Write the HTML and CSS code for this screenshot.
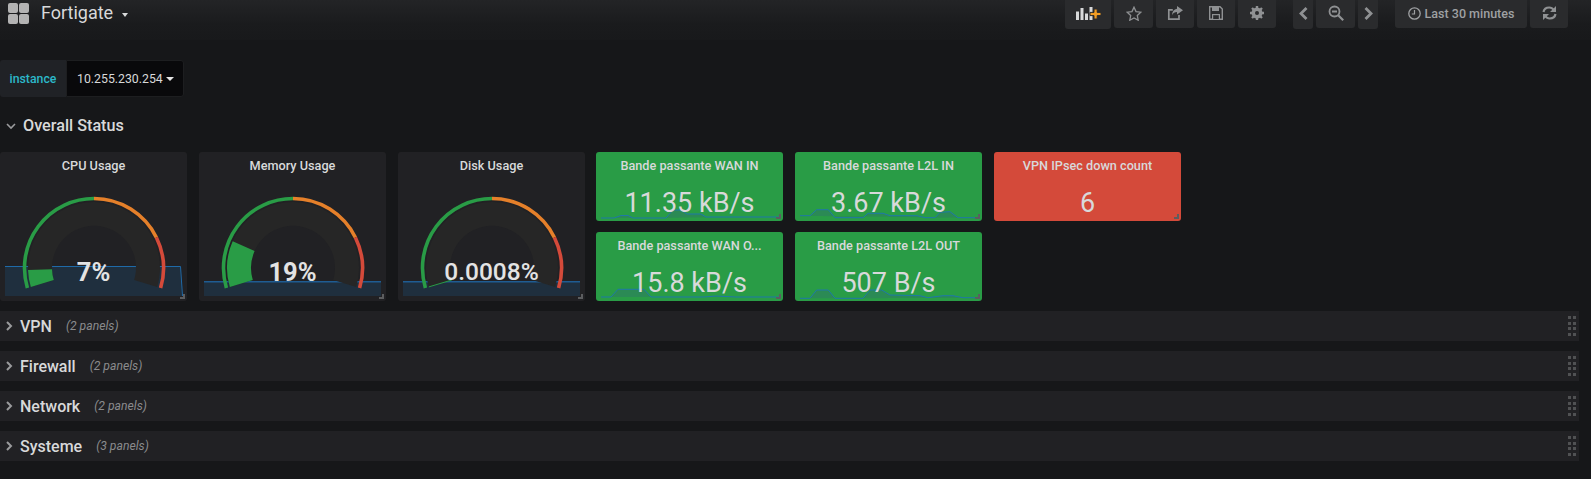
FILE: index.html
```html
<!DOCTYPE html>
<html lang="en">
<head>
    <meta charset="UTF-8">
    <title>Fortigate</title>
    <link rel="stylesheet" href="styles.css">
</head>
<body>

<header class="navbar">
    <div class="nav-left">
        <svg class="grid-icon" width="22" height="22" viewBox="0 0 22 22"><rect x="0" y="0" width="10" height="10" rx="2"/><rect x="11" y="0" width="10" height="10" rx="2"/><rect x="0" y="11" width="10" height="10" rx="2"/><rect x="11" y="11" width="10" height="10" rx="2"/></svg>
        <span class="dash-title">Fortigate</span>
        <span class="caret-small"></span>
    </div>
    <div class="nav-right">
        <div class="nav-btn w-add tall">
            <svg width="25" height="13" viewBox="0 0 25 13"><path fill="#d8d9da" d="M0 4.5h3V13H0zM4.500 1h3v12h-3zM9 6.500h3V13H9zM13.500 0h3v13h-3z"/><path fill="#f29d24" stroke="#2a2b2d" stroke-width="1" d="M18 2h3.200v3.400h3.800v3.200h-3.800V12H18V8.600h-4V5.400h4z"/></svg>
        </div>
        <div class="nav-btn w-star">
            <svg width="16" height="15" viewBox="0 0 16 15"><path fill="none" stroke="#8f9193" stroke-width="1.300" d="M8 1.200l2 4.400 4.800.6-3.500 3.300.9 4.700L8 11.900l-4.200 2.300.9-4.700L1.200 6.200 6 5.600z"/></svg>
        </div>
        <div class="nav-btn w-share">
            <svg width="16" height="15" viewBox="0 0 16 15"><path fill="none" stroke="#8f9193" stroke-width="1.700" d="M12 9v4.200H1.800V3.800h4"/><path fill="#8f9193" d="M10 0l6 4.300-6 4.300V6c-2.200 0-4 .9-5 3.200 0-3.800 2-6 5-6.500z"/></svg>
        </div>
        <div class="nav-btn w-save">
            <svg width="14" height="14" viewBox="0 0 14 14"><path fill="none" stroke="#8f9193" stroke-width="1.400" d="M.7.700h10.300l2.300 2.300v10.300H.7z"/><path fill="#8f9193" d="M3 0h7v5H3zM3 8h8v6H3z"/><path fill="#2a2b2d" d="M4.200 9.200h5.600V13H4.200z"/></svg>
        </div>
        <div class="nav-btn w-gear">
            <svg width="14" height="14" viewBox="0 0 14 14"><circle cx="7" cy="7" r="4" fill="none" stroke="#8f9193" stroke-width="3"/><path stroke="#8f9193" stroke-width="2.400" d="M7 0v14M0 7h14M2 2l10 10M12 2L2 12"/><circle cx="7" cy="7" r="2" fill="#2a2b2d"/></svg>
        </div>
        <div class="nav-btn w-arrow tall range-start">
            <svg width="9" height="13" viewBox="0 0 9 13"><path fill="none" stroke="#8f9193" stroke-width="2.800" d="M7.500 1L2 6.500 7.500 12"/></svg>
        </div>
        <div class="nav-btn w-zoom">
            <svg width="16" height="16" viewBox="0 0 16 16"><circle cx="6.500" cy="6.500" r="5" fill="none" stroke="#8f9193" stroke-width="1.800"/><path stroke="#8f9193" stroke-width="2.200" d="M10.200 10.200l5 5M4 6.500h5"/></svg>
        </div>
        <div class="nav-btn w-arrow tall">
            <svg width="9" height="13" viewBox="0 0 9 13"><path fill="none" stroke="#8f9193" stroke-width="2.800" d="M1.500 1L7 6.500 1.500 12"/></svg>
        </div>
        <div class="nav-btn w-time">
            <svg width="13" height="13" viewBox="0 0 13 13"><circle cx="6.500" cy="6.500" r="5.700" fill="none" stroke="#9fa1a3" stroke-width="1.300"/><path fill="none" stroke="#9fa1a3" stroke-width="1.200" d="M6.500 3v4H3.800"/></svg>
            <span>Last 30 minutes</span>
        </div>
        <div class="nav-btn w-refresh">
            <svg width="15" height="14" viewBox="0 0 15 14"><path fill="none" stroke="#8f9193" stroke-width="2.200" d="M1.500 6C2 3.200 4.500 1.500 7.200 1.500c2 0 3.600 1 4.600 2.500M13.500 8c-.5 2.800-3 4.500-5.700 4.500-2 0-3.600-1-4.600-2.500"/><path fill="#8f9193" d="M14 0v6H8zM1 14V8h6z"/></svg>
        </div>
    </div>
</header>

<div class="submenu">
    <label class="var-label">instance</label>
    <div class="var-value">10.255.230.254<span class="caret-white"></span></div>
</div>

<div class="row-head">
    <svg class="chev" width="10" height="7" viewBox="0 0 10 7"><path fill="none" stroke="#9a9b9d" stroke-width="1.600" d="M1 1l4 4 4-4"/></svg>
    <span>Overall Status</span>
</div>

<main class="panels">
    <div class="panel gauge">
        <div class="panel-title">CPU Usage</div>
        <svg class="spark-area" width="178" height="30" viewBox="0 0 178 30"><path fill="#1f2f3e" d="M0 .5h175l2 29.500H0z"/><path fill="none" stroke="#1f6aa8" d="M0 .5h175.500l2 29.500"/></svg>
        <svg class="gauge-svg" width="187" height="149" viewBox="0 0 187 149">
            <path fill="#262626" d="M30.800 134.900A66 66 0 1 1 157.200 134.900L134.200 128A42 42 0 1 0 53.800 128Z"/>
            <g fill="none" stroke-width="3.600">
                <path stroke="#299c46" d="M27.400 135.900A69.500 69.500 0 0 1 94 46.500"/>
                <path stroke="#e5802a" d="M94 46.500A69.500 69.500 0 0 1 156.400 85.500"/>
                <path stroke="#d44a3a" d="M156.400 85.500A69.500 69.500 0 0 1 160.600 135.900"/>
            </g>
            <path fill="#299c46" d="M30.800 134.900A66 66 0 0 1 28 118L52 117.200A42 42 0 0 0 53.800 128Z"/>
        </svg>
        <div class="gauge-value heavy">7%</div>
        <span class="resize"></span>
    </div>
    <div class="panel gauge">
        <div class="panel-title">Memory Usage</div>
        <svg class="spark-area" width="178" height="15" viewBox="0 0 178 15"><path fill="#1f2f3e" d="M0 .5h177V15H0z"/><path fill="none" stroke="#1f5c92" stroke-width="1.500" d="M0 .8h177"/></svg>
        <svg class="gauge-svg" width="187" height="149" viewBox="0 0 187 149">
            <path fill="#262626" d="M30.800 134.900A66 66 0 1 1 157.200 134.900L134.200 128A42 42 0 1 0 53.800 128Z"/>
            <g fill="none" stroke-width="3.600">
                <path stroke="#299c46" d="M27.400 135.900A69.500 69.500 0 0 1 94 46.500"/>
                <path stroke="#e5802a" d="M94 46.500A69.500 69.500 0 0 1 156.400 85.500"/>
                <path stroke="#d44a3a" d="M156.400 85.500A69.500 69.500 0 0 1 160.600 135.900"/>
            </g>
            <path fill="#299c46" d="M30.800 134.900A66 66 0 0 1 33.700 89.300L55.600 99A42 42 0 0 0 53.800 128Z"/>
        </svg>
        <div class="gauge-value heavy">19%</div>
        <span class="resize"></span>
    </div>
    <div class="panel gauge">
        <div class="panel-title">Disk Usage</div>
        <svg class="spark-area" width="178" height="15" viewBox="0 0 178 15"><path fill="#1f2f3e" d="M0 .5h177V15H0z"/><path fill="none" stroke="#1f5c92" stroke-width="1.500" d="M0 .8h177"/></svg>
        <svg class="gauge-svg" width="187" height="149" viewBox="0 0 187 149">
            <path fill="#262626" d="M30.800 134.900A66 66 0 1 1 157.200 134.900L134.200 128A42 42 0 1 0 53.800 128Z"/>
            <g fill="none" stroke-width="3.600">
                <path stroke="#299c46" d="M27.400 135.900A69.500 69.500 0 0 1 94 46.500"/>
                <path stroke="#e5802a" d="M94 46.500A69.500 69.500 0 0 1 156.400 85.500"/>
                <path stroke="#d44a3a" d="M156.400 85.500A69.500 69.500 0 0 1 160.600 135.900"/>
            </g>
            <path fill="none" stroke="#299c46" stroke-width="1" d="M30.800 134.900L53.800 128"/>
        </svg>
        <div class="gauge-value">0.0008%</div>
        <span class="resize"></span>
    </div>
    <div class="stat-grid">
        <div class="panel stat green">
            <svg class="stat-spark" viewBox="0 0 187 69"><path fill="#2b8a55" stroke="#1f78a8" d="M5 66H18L25 63.500H32L37 66H70L77 58H85L91 62H105L110 65H183"/></svg>
            <div class="panel-title">Bande passante WAN IN</div>
            <div class="stat-value">11.35 kB/s</div>
            <span class="resize"></span>
        </div>
        <div class="panel stat green">
            <svg class="stat-spark" viewBox="0 0 187 69"><path fill="#2b8a55" stroke="#1f78a8" d="M5 63.700H15L21.700 57.700H33.300L40 65.700H68L73 61.300H88L95 63.700H122L130 65.700H140L145 60.300L155 59.700L163 65.700H182"/></svg>
            <div class="panel-title">Bande passante L2L IN</div>
            <div class="stat-value">3.67 kB/s</div>
            <span class="resize"></span>
        </div>
        <div class="panel stat red">
            <div class="panel-title">VPN IPsec down count</div>
            <div class="stat-value">6</div>
            <span class="resize"></span>
        </div>
        <div class="panel stat green">
            <svg class="stat-spark" viewBox="0 0 187 69"><path fill="#2b8a55" stroke="#1f78a8" d="M5 65H15L22 57.300H48L55 65H108L120 64L140 65H183"/></svg>
            <div class="panel-title">Bande passante WAN O...</div>
            <div class="stat-value">15.8 kB/s</div>
            <span class="resize"></span>
        </div>
        <div class="panel stat green">
            <svg class="stat-spark" viewBox="0 0 187 69"><path fill="#2b8a55" stroke="#1f78a8" d="M5 66.300H15L21.700 58H33.300L40 66.300H68L75 58H86.700L95 63L125 63.700L133 65.700L148 63.700H158L168 65.700H182"/></svg>
            <div class="panel-title">Bande passante L2L OUT</div>
            <div class="stat-value">507 B/s</div>
            <span class="resize"></span>
        </div>
    </div>
</main>

<section class="rows">
    <div class="row-collapsed">
        <svg class="chev" width="7" height="10" viewBox="0 0 7 10"><path fill="none" stroke="#9a9b9d" stroke-width="2" d="M1 1l4 4-4 4"/></svg>
        <span class="row-name">VPN</span><span class="row-count">(2 panels)</span>
        <span class="drag"><i></i><i></i><i></i><i></i><i></i><i></i><i></i><i></i></span>
    </div>
    <div class="row-collapsed">
        <svg class="chev" width="7" height="10" viewBox="0 0 7 10"><path fill="none" stroke="#9a9b9d" stroke-width="2" d="M1 1l4 4-4 4"/></svg>
        <span class="row-name">Firewall</span><span class="row-count">(2 panels)</span>
        <span class="drag"><i></i><i></i><i></i><i></i><i></i><i></i><i></i><i></i></span>
    </div>
    <div class="row-collapsed">
        <svg class="chev" width="7" height="10" viewBox="0 0 7 10"><path fill="none" stroke="#9a9b9d" stroke-width="2" d="M1 1l4 4-4 4"/></svg>
        <span class="row-name">Network</span><span class="row-count">(2 panels)</span>
        <span class="drag"><i></i><i></i><i></i><i></i><i></i><i></i><i></i><i></i></span>
    </div>
    <div class="row-collapsed">
        <svg class="chev" width="7" height="10" viewBox="0 0 7 10"><path fill="none" stroke="#9a9b9d" stroke-width="2" d="M1 1l4 4-4 4"/></svg>
        <span class="row-name">Systeme</span><span class="row-count">(3 panels)</span>
        <span class="drag"><i></i><i></i><i></i><i></i><i></i><i></i><i></i><i></i></span>
    </div>
</section>

</body>
</html>
```

FILE: styles.css
```css
html, body {
    height: 479px;
    overflow: hidden;
}

body {
    margin: 0;
    background: #161719;
    color: #d8d9da;
    font-family: 'Roboto', Arial, sans-serif;
    font-size: 13px;
}

.navbar {
    display: flex;
    justify-content: space-between;
    height: 40px;
    box-sizing: border-box;
    padding-right: 23px;
    background: linear-gradient(to bottom, #232426, #1a1b1d 60%, #18191b);
}

.nav-left {
    display: flex;
    align-items: flex-start;
    padding-left: 8px;
    padding-top: 3px;
}

.grid-icon {
    fill: #b3b3b3;
}

.dash-title {
    margin-left: 11px;
    font-size: 18px;
    line-height: 20px;
}

.caret-small {
    margin: 10px 0 0 9px;
    border-top: 4px solid #d8d9da;
    border-left: 3.5px solid transparent;
    border-right: 3.5px solid transparent;
}

.nav-right {
    display: flex;
    gap: 3px;
    align-items: flex-start;
}

.nav-btn {
    display: flex;
    align-items: center;
    justify-content: center;
    gap: 4px;
    height: 28px;
    padding-bottom: 2px;
    box-sizing: border-box;
    background: #2a2b2d;
    border-radius: 0 0 3px 3px;
    color: #9fa1a3;
    font-size: 12.5px;
    font-weight: 500;
}

.tall { height: 29px; }
.w-add { width: 46px; }
.w-star { width: 39px; }
.w-share { width: 38px; }
.w-save { width: 38px; }
.w-gear { width: 38px; }
.w-arrow { width: 20px; }
.range-start { margin-left: 14px; }
.w-zoom { width: 39px; }
.w-time { width: 132px; margin-left: 14px; }
.w-refresh { width: 38px; }

.submenu {
    display: flex;
    height: 37px;
    margin-top: 20px;
    font-size: 12.3px;
}

.var-label {
    width: 66px;
    display: flex;
    align-items: center;
    justify-content: center;
    background: #202226;
    color: #2cb8c9;
    font-weight: 500;
    border-radius: 3px 0 0 3px;
}

.var-value {
    width: 118px;
    display: flex;
    align-items: center;
    padding-left: 10px;
    box-sizing: border-box;
    background: #09090b;
    border: 1px solid #1d1e20;
    border-radius: 0 3px 3px 0;
}

.caret-white {
    margin-left: 3px;
    border-top: 4px solid #e6e6e6;
    border-left: 4px solid transparent;
    border-right: 4px solid transparent;
}

.row-head {
    display: flex;
    align-items: center;
    height: 30px;
    margin-top: 13px;
    font-size: 16.2px;
    font-weight: 500;
}

.row-head .chev {
    margin: 3px 7px 0 6px;
}

.panels {
    display: flex;
    margin-top: 12px;
    gap: 12px;
}

.panel {
    position: relative;
    box-sizing: border-box;
    width: 187px;
    border-radius: 3px;
    background: #212124;
}

.gauge {
    height: 149px;
}

.panel-title {
    position: relative;
    padding-top: 6px;
    height: 25px;
    text-align: center;
    font-size: 12.7px;
    font-weight: 500;
    line-height: 15px;
}

.spark-area {
    position: absolute;
    left: 5px;
    bottom: 5px;
}

.gauge-svg {
    position: absolute;
    left: 0;
    top: 0;
}

.gauge-value {
    position: absolute;
    left: 0;
    right: 0;
    top: 105px;
    text-align: center;
    font-size: 24.5px;
    font-weight: 500;
    line-height: 30px;
    color: #e3e3e3;
}

.gauge-value.heavy {
    font-weight: 700;
    font-size: 25.5px;
}

.resize {
    position: absolute;
    right: 2px;
    bottom: 2px;
    width: 3px;
    height: 3px;
    border-right: 2px solid #5c5d5f;
    border-bottom: 2px solid #5c5d5f;
}

.stat-grid {
    display: grid;
    grid-template-columns: repeat(3, 187px);
    grid-template-rows: 69px 69px;
    gap: 11px 12px;
    margin-left: -1px;
}

.stat {
    height: 69px;
    text-align: center;
}

.green { background: #299c46; }
.red { background: #d44a3a; }

.stat-spark {
    position: absolute;
    left: 0;
    top: 0;
    width: 187px;
    height: 69px;
}

.stat-value {
    position: relative;
    margin-top: 4px;
    font-size: 27px;
    line-height: 32px;
}

.rows {
    margin-top: 10px;
    width: 1579px;
    display: flex;
    flex-direction: column;
    gap: 10px;
}

.row-collapsed {
    display: flex;
    align-items: center;
    height: 30px;
    background: #212124;
}

.row-collapsed .chev {
    margin-left: 6px;
    margin-right: 7px;
}

.row-name {
    font-size: 16px;
    font-weight: 500;
}

.row-count {
    margin-left: 14px;
    font-size: 12.2px;
    font-style: italic;
    color: #8a8b8d;
}

.drag {
    margin-left: auto;
    margin-right: 3px;
    display: grid;
    grid-template-columns: 3px 3px;
    grid-auto-rows: 3px;
    gap: 2.5px 2px;
}

.drag i {
    display: block;
    width: 3px;
    height: 3px;
    background: #505153;
}
```
